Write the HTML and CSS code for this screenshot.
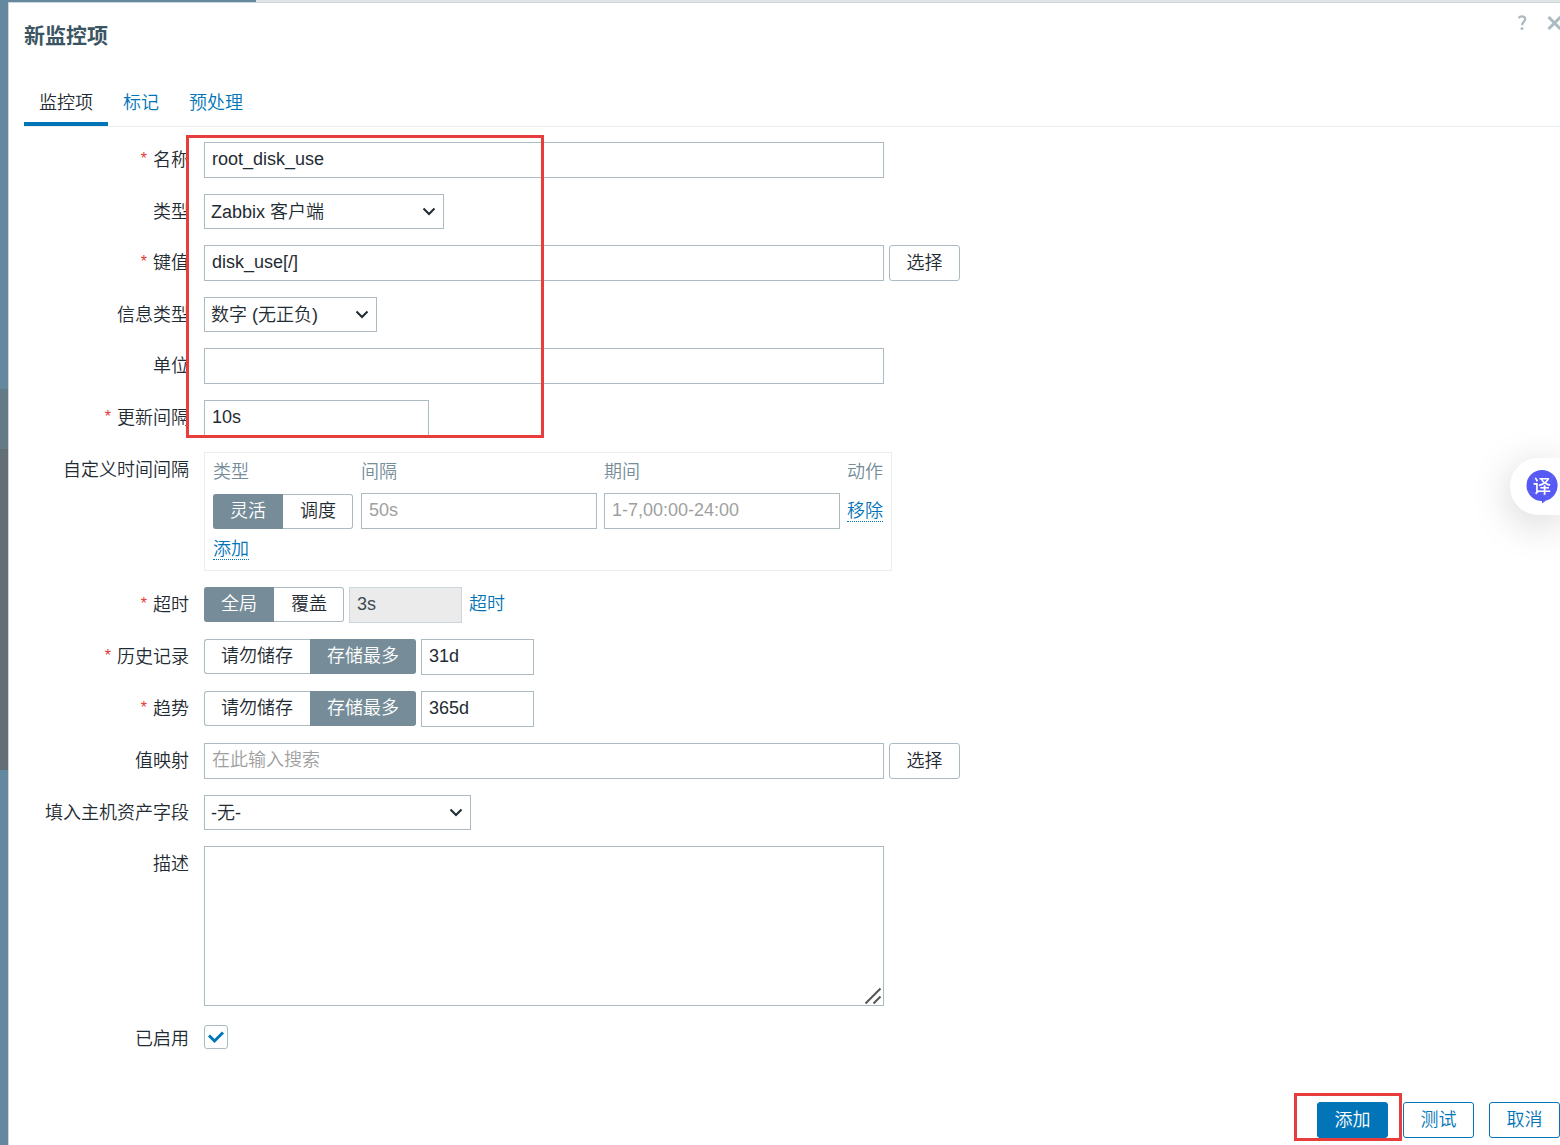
FILE: index.html
```html
<!DOCTYPE html>
<html lang="zh-CN">
    <head>
        <title>新监控项</title>
        <meta charset="UTF-8">
        <meta name="viewport" content="width=device-width,initial-scale=1">
        <link rel="stylesheet" href="styles.css">
    </head>
    <body>
        <div class="page">
            <div class="sidebar">
                <div class="menu-item"></div>
                <div class="submenu"></div>
            </div>

            <main class="overlay-dialogue">
                <header class="dialogue-header">
                    <h1>新监控项</h1>
                    <div class="header-controls">
                        <button type="button" class="btn-icon" aria-label="帮助">
                            <svg width="10" height="16" viewBox="0 0 10 16"><path d="M1.500 3.200C2.400 1.800 3.600 1.300 5 1.300c2 0 3.200 1.100 3.200 2.800C8.200 6.600 5 7 5 10.300" fill="none" stroke="currentColor" stroke-width="2.300"/><circle cx="5" cy="13.600" r="1.500" fill="currentColor"/></svg>
                        </button>
                        <button type="button" class="btn-icon" aria-label="关闭">
                            <svg width="15" height="14" viewBox="0 0 15 14"><path d="M1.500 1l12 12M13.500 1l-12 12" stroke="currentColor" stroke-width="3"/></svg>
                        </button>
                    </div>
                </header>

                <nav class="tabs">
                    <a href="#item" class="active">监控项</a>
                    <a href="#tags">标记</a>
                    <a href="#preprocessing">预处理</a>
                </nav>

                <form class="form-grid" id="item">
                    <label for="name" class="required">名称</label>
                    <div class="field"><input type="text" id="name" class="wide" value="root_disk_use"></div>

                    <label for="type">类型</label>
                    <div class="field">
                        <div class="select type-select">
                            <select id="type"><option>Zabbix 客户端</option></select>
                            <svg width="14" height="9" viewBox="0 0 14 9"><path d="M1.500 1.500L7 7l5.500-5.500"/></svg>
                        </div>
                    </div>

                    <label for="key" class="required">键值</label>
                    <div class="field">
                        <input type="text" id="key" class="wide" value="disk_use[/]">
                        <button type="button" class="btn-grey">选择</button>
                    </div>

                    <label for="value-type">信息类型</label>
                    <div class="field">
                        <div class="select value-select">
                            <select id="value-type"><option>数字 (无正负)</option></select>
                            <svg width="14" height="9" viewBox="0 0 14 9"><path d="M1.500 1.500L7 7l5.500-5.500"/></svg>
                        </div>
                    </div>

                    <label for="units">单位</label>
                    <div class="field"><input type="text" id="units" class="wide"></div>

                    <label for="delay" class="required">更新间隔</label>
                    <div class="field"><input type="text" id="delay" class="medium" value="10s"></div>

                    <span class="form-label">自定义时间间隔</span>
                    <div class="field">
                        <div class="intervals">
                            <table>
                                <thead>
                                    <tr><th>类型</th><th>间隔</th><th>期间</th><th>动作</th></tr>
                                </thead>
                                <tbody>
                                    <tr>
                                        <td class="interval-type">
                                            <div class="segmented">
                                                <input type="radio" name="interval" id="flexible" checked><label for="flexible">灵活</label>
                                                <input type="radio" name="interval" id="scheduling"><label for="scheduling">调度</label>
                                            </div>
                                        </td>
                                        <td><input type="text" aria-label="间隔" placeholder="50s"></td>
                                        <td><input type="text" aria-label="期间" placeholder="1-7,00:00-24:00"></td>
                                        <td><a href="#remove" class="link-action">移除</a></td>
                                    </tr>
                                </tbody>
                                <tfoot>
                                    <tr><td colspan="4"><a href="#add" class="link-action">添加</a></td></tr>
                                </tfoot>
                            </table>
                        </div>
                    </div>

                    <label for="timeout" class="required">超时</label>
                    <div class="field">
                        <div class="segmented">
                            <input type="radio" name="timeout-mode" id="global" checked><label for="global">全局</label>
                            <input type="radio" name="timeout-mode" id="override"><label for="override">覆盖</label>
                        </div>
                        <input type="text" id="timeout" class="small" value="3s" disabled>
                        <a href="#timeouts" class="link-timeout">超时</a>
                    </div>

                    <label for="history" class="required">历史记录</label>
                    <div class="field">
                        <div class="segmented">
                            <input type="radio" name="history-mode" id="history-off"><label for="history-off">请勿储存</label>
                            <input type="radio" name="history-mode" id="history-on" checked><label for="history-on">存储最多</label>
                        </div>
                        <input type="text" id="history" class="small" value="31d">
                    </div>

                    <label for="trends" class="required">趋势</label>
                    <div class="field">
                        <div class="segmented">
                            <input type="radio" name="trends-mode" id="trends-off"><label for="trends-off">请勿储存</label>
                            <input type="radio" name="trends-mode" id="trends-on" checked><label for="trends-on">存储最多</label>
                        </div>
                        <input type="text" id="trends" class="small" value="365d">
                    </div>

                    <label for="valuemap">值映射</label>
                    <div class="field">
                        <input type="text" id="valuemap" class="wide" placeholder="在此输入搜索">
                        <button type="button" class="btn-grey">选择</button>
                    </div>

                    <label for="inventory">填入主机资产字段</label>
                    <div class="field">
                        <div class="select inventory-select">
                            <select id="inventory"><option>-无-</option></select>
                            <svg width="14" height="9" viewBox="0 0 14 9"><path d="M1.500 1.500L7 7l5.500-5.500"/></svg>
                        </div>
                    </div>

                    <label for="description">描述</label>
                    <div class="field">
                        <div class="textarea wide">
                            <textarea id="description"></textarea>
                            <svg width="18" height="18" viewBox="0 0 18 18"><path d="M1.500 16.500l15-15M9.500 16.500l7-7"/></svg>
                        </div>
                    </div>

                    <label for="status" class="status-label">已启用</label>
                    <div class="field">
                        <div class="checkbox">
                            <input type="checkbox" id="status" checked>
                            <svg width="24" height="24" viewBox="0 0 24 24"><path d="M5 10.500l5.500 5.500L19 7.500"/></svg>
                        </div>
                    </div>

                    <div class="highlight highlight-fields"></div>
                </form>

                <footer class="dialogue-footer">
                    <div class="primary-action">
                        <button type="button" class="btn-primary">添加</button>
                        <div class="highlight highlight-add"></div>
                    </div>
                    <button type="button" class="btn-alt">测试</button>
                    <button type="button" class="btn-alt">取消</button>
                </footer>
            </main>
        </div>

        <button type="button" class="translate" aria-label="翻译">
            <svg width="32" height="34" viewBox="0 0 32 34">
                <path d="M16 0a15.500 15.500 0 0 1 4 30.500L16 33.500V31A15.500 15.500 0 0 1 16 0z" fill="#5659f3"/>
                <path d="M3 21C10 27 24 20 27 5M8 4c-4 8 2 20 15 23" fill="none" stroke="#6669f5"/>
            </svg>
            <span>译</span>
        </button>
    </body>
</html>
```
FILE: styles.css
```css
* {
    box-sizing: border-box;
}

body {
    margin: 0;
    background: #dfe4e7;
    color: #1f2c33;
    font: 18px/24px "Liberation Sans", "Noto Sans CJK SC", sans-serif;
    font-weight: 350;
    overflow-x: hidden;
}

a {
    color: #0275b8;
    text-decoration: none;
}

button, input, select, textarea {
    font: inherit;
    color: inherit;
    margin: 0;
}

button {
    cursor: pointer;
}

.page {
    display: flex;
    min-height: 100vh;
}

/* Sidebar, mostly covered by the dialogue */
.sidebar {
    flex: 0 0 256px;
    padding-top: 389px;
    background: #64899f;
}

.menu-item {
    height: 60px;
    background: #647a86;
}

.submenu {
    height: 321px;
    background: #636f75;
}

.overlay-dialogue {
    position: relative;
    flex: 1;
    display: flex;
    flex-direction: column;
    margin: 2px 0 0 -248px;
    padding-left: 15px;
    background: #fff;
    border: solid #ccd5d9;
    border-width: 1px 0 0 1px;
}

.dialogue-header {
    display: flex;
    justify-content: space-between;
    padding-top: 8px;
}

.dialogue-header h1 {
    margin: 9px 0 0;
    font-size: 21px;
    line-height: 32px;
    color: #3c5563;
}

.header-controls {
    display: flex;
    gap: 20px;
    height: 24px;
    margin-right: -2px;
}

.btn-icon {
    display: flex;
    align-items: center;
    padding: 0;
    border: 0;
    background: none;
    color: #acbbc2;
}

.tabs {
    display: flex;
    margin-top: 28px;
    border-bottom: 1px solid #ebeef0;
}

.tabs a {
    height: 46px;
    padding: 11px 15px 0;
}

.tabs .active {
    color: #1f2c33;
    border-bottom: 4px solid #0275b8;
}

.form-grid {
    position: relative;
    display: grid;
    grid-template-columns: 165px 1fr;
    gap: 16px 15px;
    padding-top: 15px;
}

.form-grid > label,
.form-label {
    padding-top: 6px;
    text-align: right;
    white-space: nowrap;
}

.required::before {
    content: "*";
    margin-right: 6px;
    color: #e33734;
    font-size: 16px;
    vertical-align: 2px;
    line-height: 16px;
}

.field {
    display: flex;
    align-items: flex-start;
    gap: 5px;
}

input[type="text"],
select,
textarea {
    height: 36px;
    padding: 0 7px 1px;
    background: #fff;
    border: 1px solid #acbbc2;
    border-radius: 0;
    outline: 0;
}

input::placeholder {
    color: #9f9f9f;
    opacity: 1;
}

input[type="text"]:disabled {
    background: #ebebeb;
    border-color: #ccd5d9;
    color: #3c4a51;
}

.wide {
    width: 680px;
}

.medium {
    width: 225px;
}

.small {
    width: 113px;
}

.select {
    display: grid;
    align-items: center;
}

.select > * {
    grid-area: 1 / 1;
}

.select select {
    width: 100%;
    height: 35px;
    padding: 0 24px 0 6px;
    appearance: none;
}

.select svg {
    justify-self: end;
    margin-right: 8px;
    fill: none;
    stroke: #1f2c33;
    stroke-width: 2;
    pointer-events: none;
}

.type-select { width: 240px; }
.value-select { width: 173px; }
.inventory-select { width: 267px; }

.btn-grey,
.btn-alt,
.btn-primary {
    min-width: 71px;
    height: 36px;
    padding: 0 16px;
    background: #fff;
    border: 1px solid #acbbc2;
    border-radius: 3px;
}

.btn-alt {
    border-color: #0275b8;
    color: #0275b8;
}

.btn-primary {
    background: #0275b8;
    border-color: #0275b8;
    color: #fff;
}

.segmented {
    display: flex;
}

.segmented input {
    position: absolute;
    opacity: 0;
}

.segmented label {
    height: 35px;
    padding: 4px 16px 0;
    border: 1px solid #acbbc2;
    cursor: pointer;
}

.segmented label:first-of-type {
    border-right: 0;
    padding-right: 17px;
    border-radius: 3px 0 0 3px;
}

.segmented label:last-of-type {
    border-left: 0;
    padding-left: 17px;
    border-radius: 0 3px 3px 0;
}

.segmented input:checked + label {
    background: #768d99;
    border-color: #768d99;
    color: #fff;
}

.intervals {
    padding: 0 8px 5px;
    border: 1px solid #ebeef0;
}

.intervals table {
    border-collapse: collapse;
}

.intervals th {
    height: 36px;
    padding: 1px 0 0;
    color: #768d99;
    font-weight: inherit;
    text-align: left;
}

.intervals td {
    padding: 4px 7px 4px 0;
}

.intervals .interval-type {
    padding-right: 8px;
}

.intervals td:last-child {
    padding-right: 0;
}

.intervals td input[type="text"] {
    display: block;
    width: 236px;
}

.intervals tfoot td {
    height: 32px;
    padding: 0;
}

.link-action {
    border-bottom: 1px dotted #0275b8;
}

.link-timeout {
    padding: 5px 2px 0;
}

.textarea {
    display: grid;
}

.textarea > * {
    grid-area: 1 / 1;
}

.textarea textarea {
    height: 160px;
    resize: none;
}

.textarea svg {
    place-self: end;
    margin: 0 2px 1px 0;
    fill: none;
    stroke: #555;
    stroke-width: 2;
    pointer-events: none;
}

.form-grid > .status-label {
    padding-top: 5px;
}

.checkbox {
    display: grid;
    padding-top: 3px;
}

.checkbox > * {
    grid-area: 1 / 1;
}

.checkbox input {
    width: 24px;
    height: 24px;
    appearance: none;
    border: 1px solid #acbbc2;
    border-radius: 3px;
}

.checkbox svg {
    display: none;
    fill: none;
    stroke: #0275b8;
    stroke-width: 3;
    pointer-events: none;
}

.checkbox input:checked + svg {
    display: block;
}

.dialogue-footer {
    display: flex;
    justify-content: flex-end;
    gap: 15px;
    margin-top: auto;
    padding: 40px 0 7px;
}

.primary-action {
    position: relative;
}

/* Red frames over the parts to fill in and press */
.highlight {
    position: absolute;
    border: 3px solid #e83d3d;
    pointer-events: none;
}

.highlight-fields {
    top: 8px;
    left: 162px;
    width: 358px;
    height: 303px;
}

.highlight-add {
    top: -9px;
    right: -14px;
    width: 108px;
    height: 48px;
}

.translate {
    position: fixed;
    top: 458px;
    right: 0;
    display: grid;
    align-items: center;
    width: 50px;
    height: 57px;
    padding: 0 2px 0 16px;
    background: #fff;
    border: 0;
    border-radius: 29px 0 0 29px;
    box-shadow: 0 8px 40px rgba(0, 0, 0, 0.18);
}

.translate > * {
    grid-area: 1 / 1;
}

.translate span {
    color: #fff;
    font-weight: 500;
    text-align: center;
}
```
